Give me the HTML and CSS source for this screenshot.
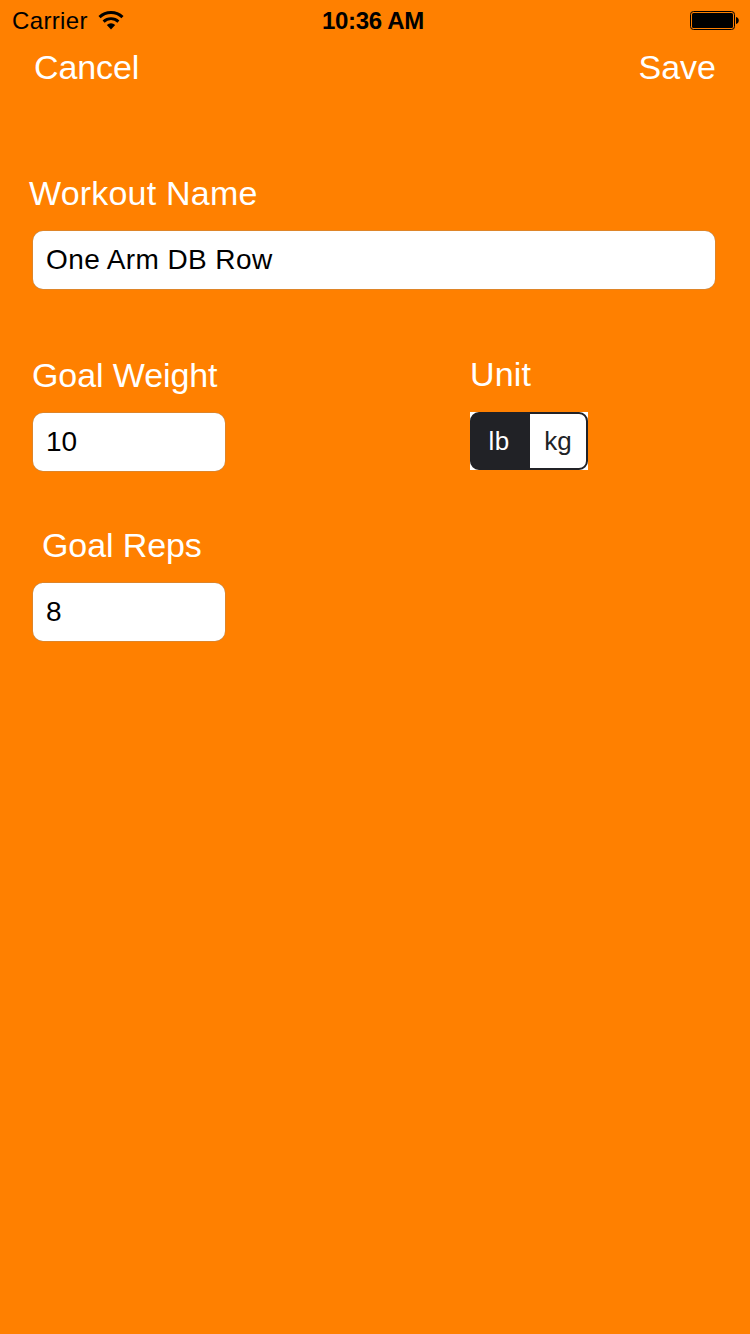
FILE: index.html
```html
<!DOCTYPE html>
<html lang="en">
<head>
  <meta charset="UTF-8" />
  <meta name="viewport" content="width=device-width, initial-scale=1.0"/>
  <title>Edit Workout</title>
  <link rel="stylesheet" href="styles.css">
</head>
<body>
  <div class="status-bar">
    <div class="carrier">
      <span class="carrier-name">Carrier</span>
      <svg class="wifi" width="26" height="20" viewBox="0 0 26 20">
        <path d="M1.5 6.2 A16.5 16.5 0 0 1 24.5 6.2" fill="none" stroke="#000" stroke-width="3"/>
        <path d="M5.6 10.6 A10.8 10.8 0 0 1 20.4 10.6" fill="none" stroke="#000" stroke-width="2.9"/>
        <path d="M13 18.4 L8.8 13.9 A6.3 6.3 0 0 1 17.2 13.9 Z"/>
      </svg>
    </div>
    <span class="clock">10:36 AM</span>
    <svg class="battery" width="49" height="19" viewBox="0 0 49 19">
      <rect x="0.5" y="0.5" width="44" height="18" rx="3" fill="none" stroke="#000"/>
      <rect x="2" y="2" width="41" height="15" rx="1.5"/>
      <path d="M46 6 C49.7 6.5 49.7 12.5 46 13 Z"/>
    </svg>
  </div>
  <div class="nav">
    <a class="cancel">Cancel</a>
    <a class="save">Save</a>
  </div>
  <form class="form">
    <div class="field">
      <label class="name-label" for="name">Workout Name</label>
      <input type="text" id="name" class="name" value="One Arm DB Row">
    </div>
    <div class="row">
      <div class="field">
        <label class="weight-label" for="weight">Goal Weight</label>
        <input type="text" id="weight" class="number" value="10">
      </div>
      <div class="unit">
        <label class="unit-label">Unit</label>
        <div class="segments">
          <div class="segment-box">
            <span class="segment selected">lb</span>
            <span class="segment">kg</span>
          </div>
        </div>
      </div>
    </div>
    <div class="field">
      <label class="reps-label" for="reps">Goal Reps</label>
      <input type="text" id="reps" class="number" value="8">
    </div>
  </form>
</body>
</html>
```
FILE: styles.css
```css
* { box-sizing: border-box; margin: 0; padding: 0; }
body {
  background: #FF8000;
  font-family: "Liberation Sans", Arial, sans-serif;
  color: #fff;
  min-height: 100vh;
}
.status-bar {
  display: grid;
  grid-template-columns: 1fr auto 1fr;
  align-items: center;
  height: 42px;
  padding: 0 11px 0 12px;
  color: #000;
  font-size: 24px;
}
.carrier { display: flex; align-items: center; gap: 10px; }
.carrier-name { letter-spacing: 0.35px; }
.clock { margin-right: 5px; font-weight: 700; letter-spacing: -0.3px; }
.battery { justify-self: end; margin-bottom: 2px; }
.nav {
  display: flex;
  justify-content: space-between;
  padding: 5px 34px 0;
  font-size: 34px;
  line-height: 40px;
}
.cancel { letter-spacing: -0.1px; }
.form {
  display: flex;
  flex-direction: column;
  padding: 86px 35px 0 33px;
}
label {
  display: block;
  font-size: 34px;
  line-height: 40px;
  white-space: nowrap;
}
.name-label { margin-left: -4px; letter-spacing: 0.2px; }
.weight-label { margin-left: -1px; letter-spacing: -0.1px; }
.reps-label { margin-left: 9px; letter-spacing: -0.1px; }
input {
  display: block;
  height: 58px;
  margin-top: 18px;
  padding: 0 13px;
  border: none;
  border-radius: 10px;
  background: #fff;
  box-shadow: 0 0 0 0.5px #c08a50;
  color: #000;
  font-family: inherit;
  font-size: 28px;
}
.name { width: 100%; letter-spacing: 0.4px; }
.number { width: 192px; }
.row {
  display: grid;
  grid-template-columns: 437px auto;
  margin: 66px 0 54px;
}
.unit-label { line-height: 38px; letter-spacing: 0.2px; }
.segments {
  width: 118px;
  height: 58px;
  margin-top: 19px;
  background: #fff;
}
.segment-box {
  display: flex;
  height: 100%;
  border: 2px solid #212226;
  border-radius: 9px;
  background: #fff;
  background: linear-gradient(to right, #212226 50%, #fff 50%);
  overflow: hidden;
}
.segment {
  flex: 1;
  color: #212226;
  font-size: 26px;
  line-height: 55px;
  text-align: center;
}
.segment.selected {
  flex: 0 0 58px;
  padding-right: 4px;
  background: #212226;
  color: #fff;
  letter-spacing: 0.4px;
}
```
